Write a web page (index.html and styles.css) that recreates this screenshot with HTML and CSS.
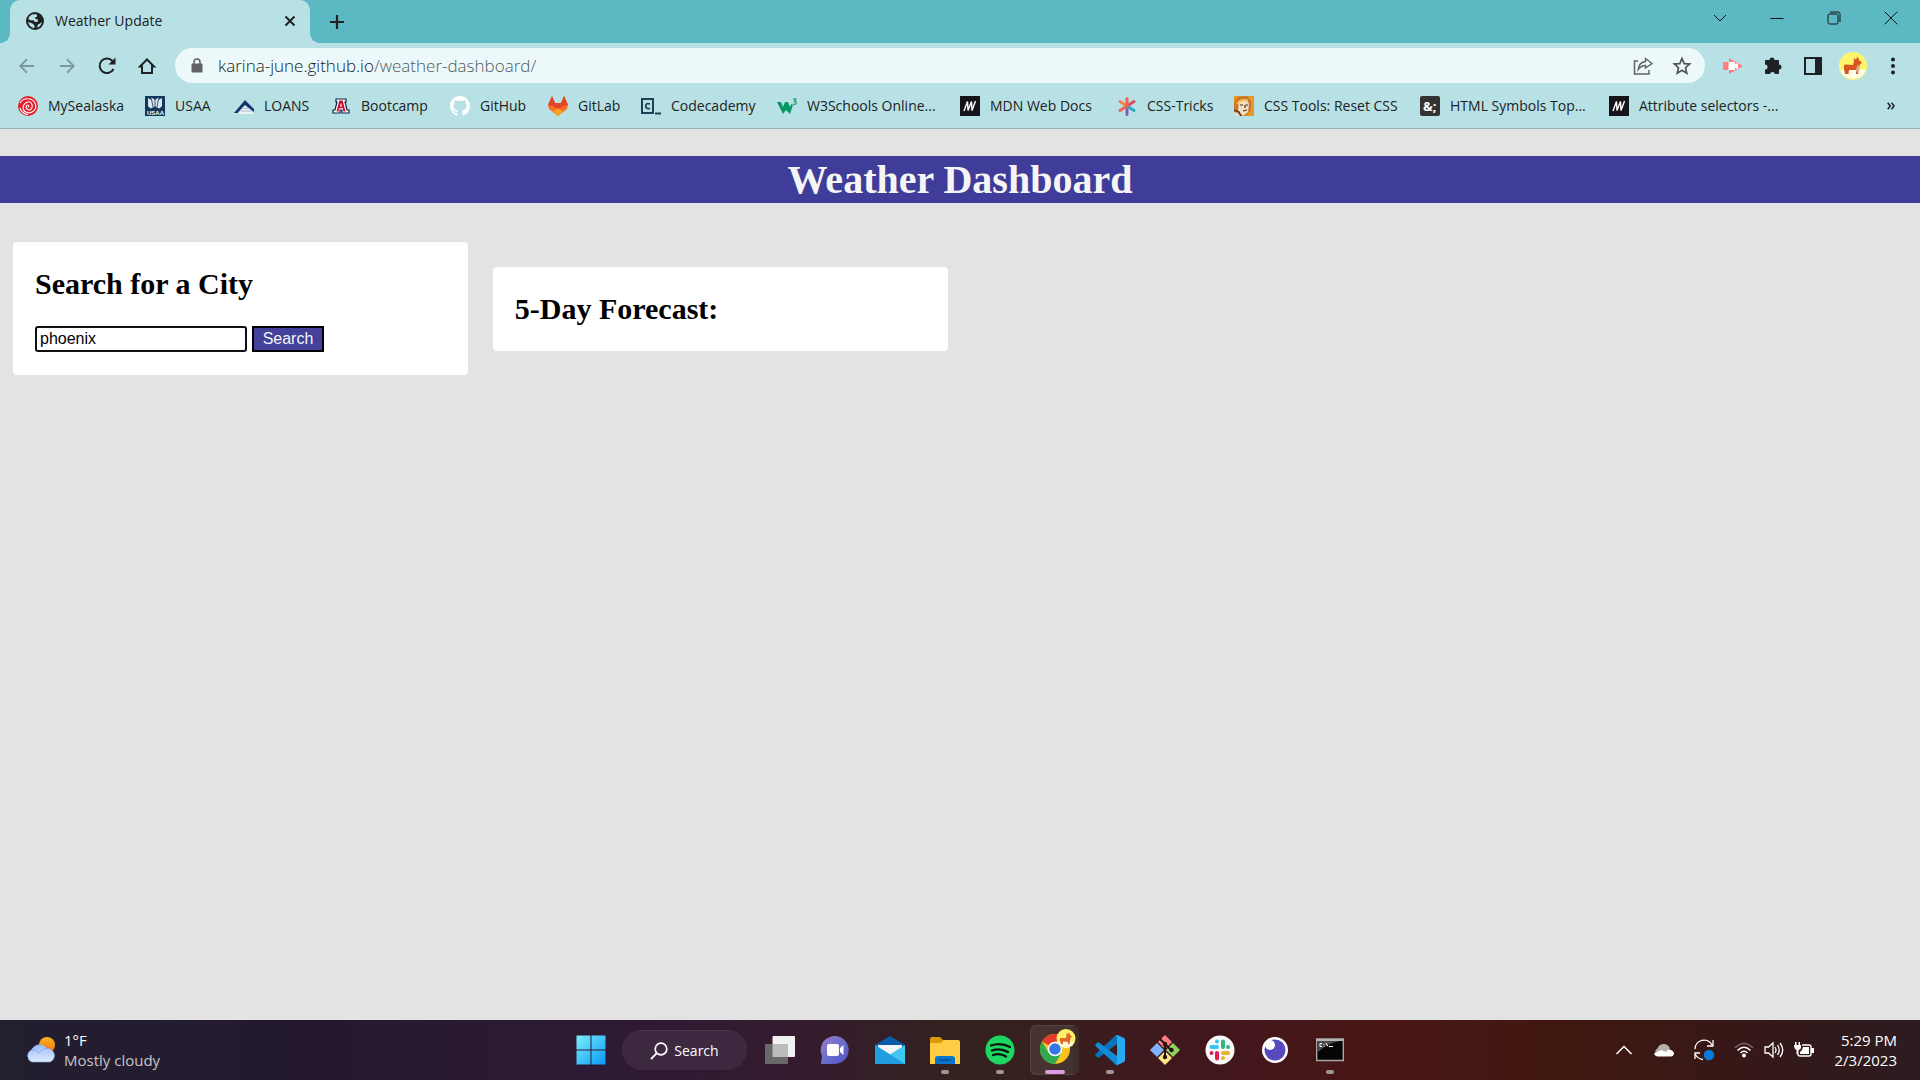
FILE: index.html
```html
<!DOCTYPE html>
<html lang="en">
<head>
<meta charset="utf-8">
<meta name="viewport" content="width=device-width, initial-scale=1">
<title>Weather Update</title>
<link rel="stylesheet" href="styles.css">
</head>
<body>
<header class="browser">
  <div class="tabstrip">
    <div class="tab">
      <svg width="18" height="18" viewBox="0 0 18 18"><circle cx="9" cy="9" r="9" fill="#202124"/><path d="M8.500 2.200C5.500 2 3 4 2.300 7L4.500 8.300H7.500L9 10H11.500L12 7.500 9.500 7 9 5.500 11 4.800V2.500ZM2.200 10 6.500 11.500 8.500 13.500V16C5.500 16 2.800 13.500 2.200 10ZM11 15.700 12 12.500 14 11.500 15.800 10C15.500 12.800 13.500 15 11 15.700Z" fill="#b8e1e5"/></svg>
      <span class="tab-title">Weather Update</span>
      <button class="icon-btn" aria-label="Close tab"><svg width="12" height="12" viewBox="0 0 12 12"><path d="M1.500 1.500 10.500 10.500M10.500 1.500 1.500 10.500" stroke="#202124" stroke-width="2"/></svg></button>
    </div>
    <button class="icon-btn new-tab" aria-label="New tab"><svg width="16" height="16" viewBox="0 0 16 16"><path d="M8 1V15M1 8H15" stroke="#202124" stroke-width="2.200"/></svg></button>
    <div class="window-buttons">
      <button class="icon-btn" aria-label="Search tabs"><svg width="14" height="14" viewBox="0 0 14 14"><path d="M1 4 7 10 13 4" fill="none" stroke="#111"/></svg></button>
      <button class="icon-btn" aria-label="Minimize"><svg width="14" height="14" viewBox="0 0 14 14"><path d="M.5 7.500H13.500" stroke="#111"/></svg></button>
      <button class="icon-btn" aria-label="Restore"><svg width="14" height="14" viewBox="0 0 14 14"><rect x="1" y="3" width="10" height="10" rx="1.500" fill="none" stroke="#111"/><path d="M3 1H11Q13 1 13 3V11" fill="none" stroke="#111"/></svg></button>
      <button class="icon-btn" aria-label="Close"><svg width="14" height="14" viewBox="0 0 14 14"><path d="M.7.700 13.300 13.300M13.300.700.700 13.300" stroke="#111"/></svg></button>
    </div>
  </div>

  <nav class="toolbar" aria-label="Navigation">
    <div class="nav-buttons">
      <button class="icon-btn" aria-label="Back"><svg width="18" height="18" viewBox="0 0 20 20"><path d="M18 10H3M10 2.500 2.500 10 10 17.500" fill="none" stroke="#7d999c" stroke-width="2"/></svg></button>
      <button class="icon-btn" aria-label="Forward"><svg width="18" height="18" viewBox="0 0 20 20"><path d="M2 10H17M10 2.500 17.500 10 10 17.500" fill="none" stroke="#7d999c" stroke-width="2"/></svg></button>
      <button class="icon-btn" aria-label="Reload"><svg width="20" height="20" viewBox="0 0 20 20"><path d="M16.500 13A7.300 7.300 0 1 1 15.500 5" fill="none" stroke="#202124" stroke-width="2"/><path d="M18.500 1.500V8.500H11.500Z" fill="#202124"/></svg></button>
      <button class="icon-btn" aria-label="Home"><svg width="20" height="20" viewBox="0 0 20 20"><path d="M3 10.500H5V17H15V10.500H17L10 3.500Z" fill="none" stroke="#202124" stroke-width="2"/></svg></button>
    </div>
    <div class="omnibox">
      <svg width="12" height="16" viewBox="0 0 12 16"><rect x=".5" y="5.500" width="11" height="9" rx="1" fill="#5f6368"/><path d="M3 6V4A3 3 0 0 1 9 4V6" fill="none" stroke="#5f6368" stroke-width="1.500"/></svg>
      <div class="url" role="textbox" aria-label="Address"><span class="host">karina-june.github.io</span>/weather-dashboard/</div>
      <button class="icon-btn" aria-label="Share"><svg width="20" height="20" viewBox="0 0 20 20"><path d="M5 5H1.500V18H16V14" fill="none" stroke="#5f6368" stroke-width="1.500"/><path d="M12.500 2.500 19 7.500 12.500 12V9.500C9 9.500 7 11 5.200 13.500 5.700 9 8 6 12.500 5.500Z" fill="none" stroke="#5f6368" stroke-width="1.400"/></svg></button>
      <button class="icon-btn" aria-label="Bookmark"><svg width="20" height="20" viewBox="0 0 20 20"><path d="M10 2.500 12.200 7.600 17.700 8 13.500 11.700 14.800 17.200 10 14.300 5.200 17.200 6.500 11.700 2.300 8 7.800 7.600Z" fill="none" stroke="#505458" stroke-width="1.700"/></svg></button>
    </div>
    <div class="extensions">
      <button class="icon-btn" aria-label="Screen recorder"><svg width="20" height="18" viewBox="0 0 20 18"><path d="M6 1 20 9 6 17V13H0V5H6Z" fill="#ff8080"/><path d="M5.500 5H12V7L15 6V12L12 11V13H5.500Z" fill="#fff"/></svg></button>
      <button class="icon-btn" aria-label="Extensions"><svg width="20" height="20" viewBox="0 0 20 20"><path d="M2 5Q2 4 3 4H6.500A2.500 2.500 0 1 1 11.500 4H15Q16 4 16 5V8.500A2.500 2.500 0 1 1 16 13.500V17Q16 18 15 18H12A2.600 2.600 0 0 0 7 18H3Q2 18 2 17V13.500A2.500 2.500 0 0 0 2 8.500Z" fill="#202124"/></svg></button>
      <button class="icon-btn" aria-label="Side panel"><svg width="18" height="18" viewBox="0 0 18 18"><rect x="1" y="1" width="16" height="16" fill="none" stroke="#202124" stroke-width="2"/><path d="M11 1H17V17H11Z" fill="#202124"/></svg></button>
      <button class="icon-btn" aria-label="Profile"><svg width="28" height="28" viewBox="0 0 28 28"><circle cx="14" cy="14" r="14" fill="#fff56d"/><path d="M1 18A14 14 0 0 0 27 18L14 16Z" fill="#fffde8"/><path d="M5 13 7 12.500 14 13 15 9 14.500 6 17 7.500 18.500 4.500 20 8 23 10.500 20.500 13 20 17 19 22H17V18L10 18 9.500 22H6L5 17Z" fill="#d9541e"/><path d="M18.500 13 21 14 20.500 18 17.500 21 17 17Z" fill="#d8b18e"/></svg></button>
      <button class="icon-btn" aria-label="Menu"><svg width="6" height="18" viewBox="0 0 6 18"><circle cx="3" cy="2.500" r="2" fill="#202124"/><circle cx="3" cy="9" r="2" fill="#202124"/><circle cx="3" cy="15.500" r="2" fill="#202124"/></svg></button>
    </div>
  </nav>

  <nav class="bookmarks" aria-label="Bookmarks">
    <div class="bookmark-list">
      <a href="#"><svg width="20" height="20" viewBox="0 0 20 20"><circle cx="10" cy="10" r="10" fill="#e3202b"/><path d="M2 7C5 1.500 14 1 17 7S14 18 9 16.500 4 9 8.500 6.500 15.500 9 13.500 12.500 7 12.500 8.500 10 11.500 10 10.500 11.500M2 12Q4 18 10 18.500" fill="none" stroke="#fff" stroke-width="1.100"/></svg>MySealaska</a>
      <a href="#"><svg width="20" height="20" viewBox="0 0 20 20"><path d="M0 0H20V20H0Z" fill="#12395b"/><path d="M3 2 6.500 4V1.500L10 4 13.500 1.500V4L17 2V10L14.500 12.500 10 10.500 5.500 12.500 3 10Z" fill="#dce6ee"/><path d="M6.500 3 8 11M10 4V11M13.500 3 12 11" stroke="#12395b" stroke-width=".8"/><text x="2" y="19" class="logo-usaa">USAA</text></svg>USAA</a>
      <a href="#"><svg width="20" height="20" viewBox="0 0 20 20"><path d="M4 18H20L10 9Z" fill="#eef1f5"/><path d="M0 17 11 4 20 13V16L11 9 3.500 17Z" fill="#10346e"/><path d="M7 15H17M9 12.500H14" stroke="#aebbcf"/></svg>LOANS</a>
      <a href="#"><svg width="20" height="20" viewBox="0 0 20 20"><path d="M5 3H15V6H14L16 14H18V17H11V14H9V17H2V14H4L6 6H5Z" fill="#fff" stroke="#0c234b" stroke-width="1.200"/><path d="M8.300 4.500H11.700L14.500 15.500H12.500L11.800 12.300H8.200L7.500 15.500H5.500ZM10 7 8.900 10.500H11.100Z" fill="#c8102e" fill-rule="evenodd"/></svg>Bootcamp</a>
      <a href="#"><svg width="20" height="20" viewBox="0 0 16 16"><path fill="#fff" d="M8 0C3.580 0 0 3.580 0 8c0 3.540 2.290 6.530 5.470 7.590.4.070.55-.17.550-.38 0-.19-.01-.82-.01-1.490-2.010.37-2.530-.49-2.690-.94-.09-.23-.48-.94-.82-1.130-.28-.15-.68-.52-.01-.53.630-.01 1.080.580 1.230.820.720 1.210 1.870.870 2.330.660.070-.52.280-.87.510-1.070-1.780-.2-3.640-.89-3.640-3.950 0-.87.310-1.590.820-2.150-.08-.2-.36-1.020.080-2.120 0 0 .67-.21 2.200.820.640-.18 1.320-.27 2-.27s1.360.090 2 .27c1.530-1.040 2.200-.82 2.200-.82.440 1.100.160 1.920.080 2.120.510.560.820 1.270.820 2.150 0 3.070-1.870 3.750-3.650 3.950.290.250.540.730.540 1.480 0 1.070-.01 1.930-.01 2.200 0 .21.150.460.550.380A8.010 8.010 0 0 0 16 8c0-4.420-3.580-8-8-8z"/></svg>GitHub</a>
      <a href="#"><svg width="20" height="20" viewBox="0 0 20 20"><path d="M4 0 7 7H13L16 0 20 9 19 13 10 20 1 13 0 9Z" fill="#fc6d26"/><path d="M4 0 7 7H13L16 0 20 9 15 10 10 14 5 10 0 9Z" fill="#e24329"/><path d="M5 15.500 10 12 15 15.500 10 20Z" fill="#fca326"/></svg>GitLab</a>
      <a href="#"><svg width="20" height="20" viewBox="0 0 20 20"><path d="M1 3H12V17H1Z" fill="none" stroke="#1f4056" stroke-width="2"/><path d="M9 8Q4.800 6.500 4.800 10T9 12.300M14 17.500H20" fill="none" stroke="#1f4056" stroke-width="1.800"/></svg>Codecademy</a>
      <a href="#"><svg width="20" height="20" viewBox="0 0 20 20"><path d="M0 6H4L6 11 8 6H11L13 11 14 8 16 9 13 18 9 14 6 18Z" fill="#059862"/><path d="M16 3H19L17.500 5.300Q19.500 5.500 19 7.500 18 9 16 8" fill="none" stroke="#059862" stroke-width="1.200"/></svg>W3Schools Online...</a>
      <a href="#"><svg width="20" height="20" viewBox="0 0 20 20"><path d="M0 0H20V20H0Z" fill="#15141a"/><path d="M4 15 7.500 5.500 8 14.500 11.500 5.500 12 14.500 15.500 5" fill="none" stroke="#fff" stroke-width="1.400"/></svg>MDN Web Docs</a>
      <a href="#"><svg width="20" height="20" viewBox="0 0 20 20"><g stroke-width="3" stroke-linecap="round"><path d="M10 10V18.500" stroke="#8b5da7"/><path d="M10 10 3 14.500" stroke="#f1605a"/><path d="M10 10 3 5.500" stroke="#f58246"/><path d="M10 10 17 14.500" stroke="#28a9c8"/><path d="M10 10 17 5.500" stroke="#dc4c66"/><path d="M10 10V2.500" stroke="#ee6352"/></g></svg>CSS-Tricks</a>
      <a href="#"><svg width="20" height="20" viewBox="0 0 20 20"><path d="M0 0H20V20H0Z" fill="#e79a23"/><path d="M0 7 4 1 13 0 17 5V14L12 20H0Z" fill="#c9762d"/><path d="M5 6 13 3 15 8 14 16 9 20 4 14Z" fill="#f4dfc3"/><path d="M3 8Q7 2 14 5" fill="none" stroke="#f5bd53" stroke-width="2"/><path d="M6 9H9M11.500 9H14M11 9V12M9 15 13 14M0 14 5 16 7 20" fill="none" stroke="#4a3025" stroke-width="1.200"/><path d="M0 16 4 17 6 20H0Z" fill="#ddd"/></svg>CSS Tools: Reset CSS</a>
      <a href="#"><svg width="20" height="20" viewBox="0 0 20 20"><rect width="20" height="20" rx="2" fill="#333"/><text x="3" y="15" class="logo-amp">&amp;;</text></svg>HTML Symbols Top...</a>
      <a href="#"><svg width="20" height="20" viewBox="0 0 20 20"><path d="M0 0H20V20H0Z" fill="#15141a"/><path d="M4 15 7.500 5.500 8 14.500 11.500 5.500 12 14.500 15.500 5" fill="none" stroke="#fff" stroke-width="1.400"/></svg>Attribute selectors -...</a>
    </div>
    <button class="icon-btn" aria-label="More bookmarks"><svg width="8" height="8" viewBox="0 0 8 8"><path d="M.7.700 3.300 4 .7 7.300M4.500.700 7.100 4 4.500 7.300" fill="none" stroke="#202124" stroke-width="1.500"/></svg></button>
  </nav>
</header>

<main class="page">
  <h1>Weather Dashboard</h1>
  <div class="cards">
    <section class="card search-card">
      <h2><label for="city">Search for a City</label></h2>
      <form class="search-form">
        <input id="city" type="text" value="phoenix">
        <button type="button">Search</button>
      </form>
    </section>
    <section class="card forecast">
      <h2>5-Day Forecast:</h2>
    </section>
  </div>
</main>

<footer class="taskbar">
  <button class="weather">
    <svg width="32" height="28" viewBox="0 0 32 28"><defs><linearGradient id="cloud" x2="0" y2="1"><stop stop-color="#9fbff7"/><stop offset="1" stop-color="#dbe9fd"/></linearGradient><linearGradient id="sun" x2="0" y2="1"><stop stop-color="#fbb71c"/><stop offset="1" stop-color="#f36b12"/></linearGradient></defs><circle cx="22" cy="9" r="8" fill="url(#sun)"/><path d="M7 26A6.500 6.500 0 0 1 6.500 14 9 9 0 0 1 22 12.500 7 7 0 0 1 25 26Z" fill="url(#cloud)" stroke="#83a6ec" stroke-width=".6"/><path d="M6.500 14Q11 13 14 17M14 17Q17 12 22 12.500" fill="none" stroke="#86a8e8"/></svg>
    <span class="weather-text"><span>1°F</span><span class="weather-desc">Mostly cloudy</span></span>
  </button>

  <div class="apps">
    <button class="app" aria-label="Start"><svg width="30" height="30" viewBox="0 0 30 30"><defs><linearGradient id="win" x2="1" y2="1"><stop stop-color="#7deffb"/><stop offset="1" stop-color="#0797f8"/></linearGradient></defs><path d="M.5.500H14.500V14.500H.5ZM15.500.500H29.500V14.500H15.500ZM.5 15.500H14.500V29.500H.5ZM15.500 15.500H29.500V29.500H15.500Z" fill="url(#win)"/></svg></button>
    <button class="task-search"><svg width="18" height="18" viewBox="0 0 18 18"><circle cx="11" cy="7" r="5.800" fill="none" stroke="#fff" stroke-width="1.700"/><path d="M6.800 11.200 1 17" stroke="#fff" stroke-width="1.800"/></svg>Search</button>
    <button class="app" aria-label="Task view"><svg width="30" height="28" viewBox="0 0 30 28"><rect x="7.500" width="22.500" height="21" rx="1" fill="#f1f1f1"/><rect y="8" width="23" height="20" rx="1" fill="#6b6869"/><path d="M7.500 8H23V21H7.500Z" fill="#bdbcbc"/></svg></button>
    <button class="app" aria-label="Chat"><svg width="30" height="30" viewBox="0 0 30 30"><defs><linearGradient id="chat" x2="1" y2="1"><stop stop-color="#9d7ac5"/><stop offset=".5" stop-color="#6b70cc"/><stop offset="1" stop-color="#514fc4"/></linearGradient></defs><path d="M1 29 2 21A14 14 0 1 1 15 29Z" fill="url(#chat)"/><rect x="7" y="9" width="12" height="12" rx="2" fill="#fff"/><path d="M20 13 23.500 10V20L20 17Z" fill="#fff"/></svg></button>
    <button class="app" aria-label="Mail"><svg width="30" height="28" viewBox="0 0 30 28"><path d="M0 9 15 0 30 9V14H0Z" fill="#0a5ca8"/><path d="M3 9H27V22H3Z" fill="#f5f5f5"/><path d="M0 9 15 18.500 30 9V28H0Z" fill="#3bc8f4"/><path d="M0 9 30 28H0Z" fill="#219ee0"/></svg></button>
    <button class="app" aria-label="File Explorer"><svg width="30" height="27" viewBox="0 0 30 27"><path d="M0 2Q0 0 2 0H10L13 3H29V8H0Z" fill="#dc9a05"/><path d="M0 6H11L14 3H28Q30 3 30 5V27H0Z" fill="#ffcd43"/><path d="M5 27V22Q5 19 8 19H22Q25 19 25 22V27Z" fill="#0876cf"/><path d="M9 23H21" stroke="#124d85" stroke-width="1.500"/></svg><i class="dot"></i></button>
    <button class="app" aria-label="Spotify"><svg width="30" height="30" viewBox="0 0 30 30"><circle cx="15" cy="15" r="14.500" fill="#1ed760"/><path d="M6 10.500Q16 7 25 12M7 15.500Q15.500 12.500 23 17M8 20Q15 17.500 21 21.500" fill="none" stroke="#111" stroke-width="2.300" stroke-linecap="round"/></svg><i class="dot"></i></button>
    <button class="app active" aria-label="Chrome"><svg class="chrome-icon" width="36" height="36" viewBox="0 0 36 36"><circle cx="15" cy="20" r="15" fill="#fcc31e"/><path d="M15 20 2 12.500A15 15 0 0 1 28 12.500H15Z" fill="#e33b2e"/><path d="M2 12.500A15 15 0 0 0 15 35L21.500 23.800 15 20 8.500 23.800Z" fill="#2da94f"/><circle cx="15" cy="20" r="7.300" fill="#fff"/><circle cx="15" cy="20" r="5.800" fill="#3578e5"/><circle cx="26" cy="9.500" r="9.500" fill="#fff06b"/><path d="M17.500 13Q26 11 34.500 13Q31 19 26 19T17.500 13Z" fill="#fff8cf"/><path d="M20 9 26 9 26.500 6 26 4 28 5 29 3 30 6 32 7.500 30.500 9 29.500 15H28V13L23 12.500V15H21L20 12Z" fill="#df682a"/></svg><i class="dot"></i></button>
    <button class="app" aria-label="Visual Studio Code"><svg width="30" height="30" viewBox="0 0 30 30"><path d="M22 0V9L4 22.500Q3 23 2 22L.5 20.500Q0 19.500 1 18.500L20 1Z" fill="#0873bd"/><path d="M22 30V21L4 7.500Q3 7 2 8L.5 9.500Q0 10.500 1 11.500L20 29Z" fill="#108bd6"/><path d="M20 1Q21 0 22.500 0L29 3Q30 3.500 30 5V25Q30 26.500 29 27L22.500 30Q21 30 20 29 22 30 22 27V3Q22 0 20 1Z" fill="#28a9f3"/></svg><i class="dot"></i></button>
    <button class="app" aria-label="Git"><svg width="30" height="30" viewBox="0 0 30 30"><path d="M15 0 22 7 15 14 8 7Z" fill="#ff8080"/><path d="M7 8 14 15 7 22 0 15Z" fill="#80b3ff"/><path d="M23 8 30 15 23 22 16 15Z" fill="#8dd35f"/><path d="M15 16 22 23 15 30 8 23Z" fill="#ffe680"/><path d="M10 4 15 9V22M15 9 21 15" fill="none" stroke="#25130f" stroke-width="2"/><circle cx="15" cy="9" r="2.200" fill="#25130f"/><circle cx="21.500" cy="15" r="2.200" fill="#25130f"/><circle cx="15" cy="22" r="2.200" fill="#25130f"/></svg></button>
    <button class="app" aria-label="Slack"><svg width="30" height="30" viewBox="0 0 30 30"><circle cx="15" cy="15" r="14.500" fill="#f8f8f8"/><g stroke-width="4" stroke-linecap="round"><path d="M12 6.500V6.500M6.500 12H12" stroke="#36c5f0"/><path d="M18 6.500V12M23 12V12" stroke="#2eb67d"/><path d="M18 18H23M18 23V23" stroke="#ecb22e"/><path d="M12 18V23.500M6.500 18V18" stroke="#e01e5a"/></g></svg></button>
    <button class="app" aria-label="Insomnia"><svg width="30" height="30" viewBox="0 0 30 30"><circle cx="15" cy="15" r="13" fill="#fff"/><circle cx="15" cy="15" r="10.500" fill="#5849be"/><circle cx="10" cy="10" r="5" fill="#fff"/></svg></button>
    <button class="app" aria-label="Command Prompt"><svg width="28" height="24" viewBox="0 0 28 24"><path d="M.7 1H27.300V22.500H.7Z" fill="#050505" stroke="#a8a8a8" stroke-width="1.400"/><path d="M1 1H27V3H1Z" fill="#b5b5b5"/><path d="M2 3H24Q10 6 2 14Z" fill="#4b4b4b"/><path d="M6 5.500H4V8.500H6M8 6V6.800M8 8V8.600M10 5 12 8.500M13 8.500H17" fill="none" stroke="#fff"/></svg><i class="dot"></i></button>
  </div>

  <div class="tray">
    <div class="tray-icons">
      <button class="icon-btn" aria-label="Show hidden icons"><svg width="18" height="12" viewBox="0 0 18 12"><path d="M1.500 10 9 2.500 16.500 10" fill="none" stroke="#fff" stroke-width="1.500"/></svg></button>
      <button class="icon-btn" aria-label="OneDrive"><svg width="20" height="14" viewBox="0 0 20 14"><path d="M4 13A4 4 0 0 1 3.500 5.500 6.500 6.500 0 0 1 15.500 4.500L16 9Z" fill="#b8aeae"/><path d="M4 13.500Q1 13.500 0 10.500L7 7 12 9Q14 5.500 17 7 20 8 20 11 19 13.500 17 13.500Z" fill="#fff"/></svg></button>
      <button class="icon-btn" aria-label="Updates"><svg width="22" height="22" viewBox="0 0 22 22"><path d="M2 10A9 9 0 0 1 19 6M20 1V7H14M7 14H2V20M2 15Q5 20 10 20.500" fill="none" stroke="#fff" stroke-width="1.300"/><circle cx="16" cy="16" r="5.200" fill="#0879df"/></svg></button>
    </div>
    <button class="status" aria-label="Network, volume, battery">
      <svg width="20" height="16" viewBox="0 0 20 16"><path d="M1 6Q10-3 19 6" fill="none" stroke="#7d6464" stroke-width="1.500"/><path d="M3.500 8.500Q10 2 16.500 8.500M6.500 11Q10 7.500 13.500 11" fill="none" stroke="#fff" stroke-width="1.600"/><circle cx="10" cy="13.500" r="2" fill="#fff"/></svg>
      <svg width="20" height="18" viewBox="0 0 20 18"><path d="M1 6H4.500L9 2V16L4.500 12H1Z" fill="none" stroke="#fff" stroke-width="1.300"/><path d="M11 6Q13 9 11 12M13.500 4Q17 9 13.500 14M16 2Q21.500 9 16 16" fill="none" stroke="#fff" stroke-width="1.300"/></svg>
      <svg width="20" height="18" viewBox="0 0 20 18"><path d="M8 4H15Q17 4 17 6V13Q17 15 15 15H6Q4 15 4 13" fill="none" stroke="#fff" stroke-width="1.400"/><path d="M9 6H15V13H6V11L8 9ZM17 7H20V12H17ZM0 4H7V7Q6 9 4.500 9V13H2.500V9Q0 8 0 4ZM1 1H2.500V4H1ZM4.500 1H6V4H4.500Z" fill="#fff"/></svg>
    </button>
    <button class="clock"><span>5:29 PM</span><span>2/3/2023</span></button>
  </div>
</footer>
</body>
</html>
```

FILE: styles.css
```css
* { box-sizing: border-box; }

body {
  margin: 0;
  min-height: 100vh;
  display: flex;
  flex-direction: column;
  background: #e3e3e3;
  font-family: "Open Sans", "Noto Sans", sans-serif;
  font-size: 14px;
  line-height: 20px;
  color: #202124;
}

button {
  font: inherit;
  color: inherit;
  border: 0;
  padding: 0;
  background: none;
}

svg { display: block; flex: none; }

.icon-btn {
  display: flex;
  align-items: center;
  justify-content: center;
}

/* Browser chrome */
.browser {
  background: #b8e1e5;
  border-bottom: 1px solid #8fb5b9;
}

.tabstrip {
  display: flex;
  height: 43px;
  padding: 0 1px 0 10px;
  background: #5cb8c2;
}

.tab {
  position: relative;
  display: flex;
  align-items: center;
  gap: 11px;
  width: 300px;
  padding: 0 14px 2px 16px;
  border-radius: 10px 10px 0 0;
  background: #b8e1e5;
}

.tab::before,
.tab::after {
  content: "";
  position: absolute;
  bottom: 0;
  width: 10px;
  height: 10px;
}

.tab::before {
  right: 100%;
  background: radial-gradient(circle at 0 0, #5cb8c2 10px, #b8e1e5 10px);
}

.tab::after {
  left: 100%;
  background: radial-gradient(circle at 100% 0, #5cb8c2 10px, #b8e1e5 10px);
}

.tab-title { flex: 1; }

.new-tab { margin: 0 auto 0 19px; }

.window-buttons { display: flex; }

.window-buttons .icon-btn {
  width: 57px;
  height: 36px;
}

.toolbar {
  display: flex;
  align-items: center;
  height: 45px;
}

.nav-buttons {
  display: flex;
  padding: 0 8px 0 7px;
}

.nav-buttons .icon-btn,
.extensions .icon-btn { width: 40px; }

.omnibox {
  flex: 1;
  display: flex;
  align-items: center;
  gap: 15px;
  height: 35px;
  padding: 0 13px 0 16px;
  border-radius: 18px;
  background: #ecf8f9;
}

.url {
  flex: 1;
  font-size: 17px;
  font-weight: 300;
  color: #4f5b5e;
}

.host { color: #202124; }

.omnibox .icon-btn + .icon-btn { margin-left: 4px; }

.extensions {
  display: flex;
  padding: 0 7px 0 8px;
}

.bookmarks {
  display: flex;
  align-items: center;
  justify-content: space-between;
  height: 40px;
  padding: 0 25px 5px 18px;
}

.bookmark-list {
  display: grid;
  grid-template-columns: 127px 89px 97px 119px 98px 93px 136px 183px 157px 117px 186px 189px auto;
}

.bookmark-list a {
  display: flex;
  align-items: center;
  gap: 10px;
  color: inherit;
  text-decoration: none;
  white-space: nowrap;
}

.logo-usaa { font: bold 6px "Liberation Sans", sans-serif; fill: #fff; }
.logo-amp { font: bold 13px "Open Sans", sans-serif; fill: #fff; }

/* Weather page */
.page {
  flex: 1;
  font-family: "Liberation Serif", "Times New Roman", serif;
  color: #000;
}

h1 {
  margin: 27px 0 39px;
  font-size: 40px;
  line-height: 47px;
  text-align: center;
  color: #f5f5f5;
  background: #3f3d99;
}

.cards {
  display: grid;
  grid-template-columns: repeat(4, minmax(0, 1fr));
  align-items: start;
  gap: 25px;
  padding: 0 13px;
}

.card {
  padding: 25px 22px;
  border-radius: 4px;
  background: #fff;
}

.search-card { padding-bottom: 23px; }

.forecast { margin-top: 25px; }

h2 {
  margin: 0;
  font-size: 30px;
  line-height: 34px;
}

.search-form {
  display: flex;
  gap: 5px;
  margin-top: 25px;
}

.search-form input,
.search-form button {
  height: 26px;
  border: 2px solid #000;
  font: 16px/20px "Liberation Sans", Arial, sans-serif;
}

.search-form input {
  width: 212px;
  padding: 0 3px;
  border-color: #101010;
  border-radius: 3px;
  background: #fff;
  color: #000;
}

.search-form button {
  width: 72px;
  background: #43419b;
  color: #f5f5f5;
}

/* Taskbar */
.taskbar {
  display: grid;
  grid-template-columns: 1fr auto 1fr;
  align-items: center;
  height: 60px;
  color: #fff;
  background: linear-gradient(90deg, #231f2f, #24192f 16%, #2e1a35 33%, #351b2d 42%, #33231f 50%, #40171d 62%, #481616 72%, #40180f 81%, #371817 90%, #2d1b20);
}

.weather {
  display: flex;
  align-items: center;
  gap: 7px;
  padding-left: 25px;
  font-size: 15px;
  text-align: left;
}

.weather-text,
.clock {
  display: flex;
  flex-direction: column;
}

.weather-desc { color: #c8c4cb; }

.apps { display: flex; align-items: center; }

.app {
  position: relative;
  display: flex;
  align-items: center;
  justify-content: center;
  width: 55px;
  height: 60px;
}

.task-search {
  display: flex;
  align-items: center;
  justify-content: center;
  gap: 6px;
  width: 125px;
  height: 40px;
  margin: 0 5px 0 4px;
  border-radius: 20px;
  border-top: 1px solid #4b3548;
  background: #3d293f;
}

.dot {
  position: absolute;
  bottom: 6px;
  width: 8px;
  height: 4px;
  border-radius: 2px;
  background: #a09698;
}

.active::before {
  content: "";
  position: absolute;
  inset: 5px 3px;
  border: 1px solid #56433f;
  border-right-width: 6px;
  border-right-color: #402d2a;
  border-radius: 6px;
  background: #46332f;
}

.active .dot { width: 20px; background: #dc9be5; }

.chrome-icon { position: relative; margin: -6px 0 0 6px; }

.tray {
  display: flex;
  align-items: center;
  justify-content: flex-end;
  padding-right: 23px;
}

.tray-icons { display: flex; }
.tray-icons .icon-btn { width: 40px; }

.status {
  display: flex;
  align-items: center;
  gap: 10px;
  padding: 0 10px;
}

.clock {
  width: 73px;
  font-size: 15px;
  text-align: right;
}
```
